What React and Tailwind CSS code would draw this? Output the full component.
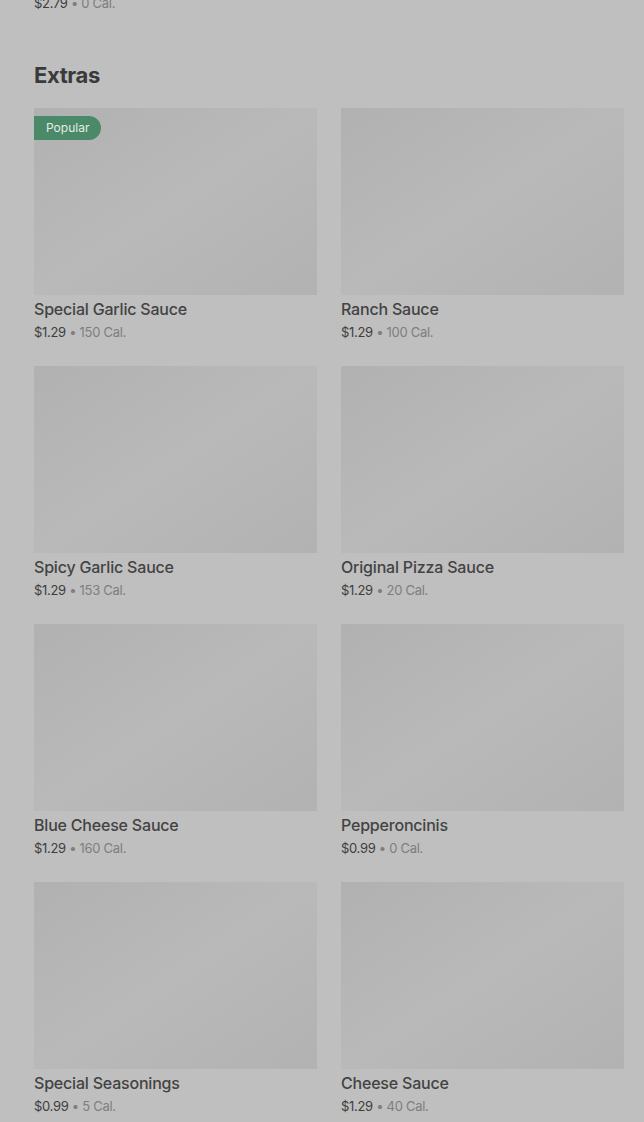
import React from 'react';

const items = [
  { name: 'Special Garlic Sauce', price: '$1.29', cal: '150 Cal.', popular: true },
  { name: 'Ranch Sauce', price: '$1.29', cal: '100 Cal.' },
  { name: 'Spicy Garlic Sauce', price: '$1.29', cal: '153 Cal.' },
  { name: 'Original Pizza Sauce', price: '$1.29', cal: '20 Cal.' },
  { name: 'Blue Cheese Sauce', price: '$1.29', cal: '160 Cal.' },
  { name: 'Pepperoncinis', price: '$0.99', cal: '0 Cal.' },
  { name: 'Special Seasonings', price: '$0.99', cal: '5 Cal.' },
  { name: 'Cheese Sauce', price: '$1.29', cal: '40 Cal.' },
];

function PriceLine({ price, cal }) {
  return (
    <p className="text-[13px] leading-5 tracking-[-0.3px]">
      <span className="text-[#3e3e3e]">{price}</span>
      <span className="text-[#7e7e7e]"> • {cal}</span>
    </p>
  );
}

function ItemCard({ item }) {
  return (
    <div className="flex flex-col">
      <div className="relative h-[187px] bg-linear-to-br from-[#b1b1b1] via-[#b9b9b9] to-[#b2b2b2]">
        {item.popular && (
          <span className="absolute left-0 top-[8px] h-6 px-3 flex items-center rounded-r-full bg-[#4a8a68] text-[12px] text-[#e4ece7]">
            Popular
          </span>
        )}
      </div>
      <h3 className="mt-[2px] mb-[1px] text-[16px] leading-6 font-medium tracking-[-0.2px] text-[#434343]">{item.name}</h3>
      <PriceLine price={item.price} cal={item.cal} />
    </div>
  );
}

export default function App() {
  return (
    <div className="min-h-[1122px] bg-[#bfbfbf] pl-[34px] pr-[20px] overflow-hidden" style={{ fontFamily: 'Inter, Roboto, sans-serif' }}>
      <div className="-mt-[7px]">
        <PriceLine price="$2.79" cal="0 Cal." />
      </div>
      <h2 className="mt-[48px] text-[22px] leading-7 font-bold tracking-[-0.4px] text-[#3a3a3a]">Extras</h2>
      <div className="mt-[19px] grid grid-cols-2 gap-x-[24px] gap-y-[24px]">
        {items.map((item) => (
          <ItemCard key={item.name} item={item} />
        ))}
      </div>
    </div>
  );
}
